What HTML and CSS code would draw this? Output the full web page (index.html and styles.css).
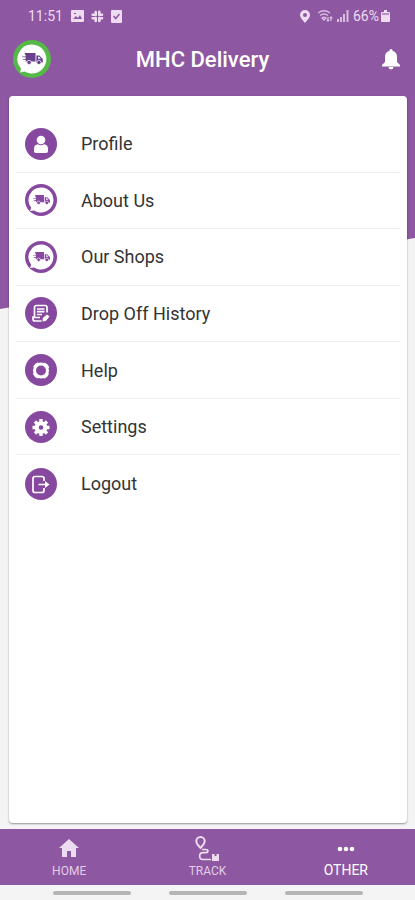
FILE: index.html
```html
<!DOCTYPE html>
<html lang="en">

<head>
    <title>MHC Delivery</title>
    <meta charset="utf-8">
    <meta name="viewport" content="width=device-width, initial-scale=1.0">
    <link rel="stylesheet" href="styles.css">
</head>

<body>

    <!-- shared symbols -->
    <svg class="symbols" aria-hidden="true">
        <symbol id="truck" viewBox="0 0 24 14">
            <path d="M3 0h12.500v10H4V8H1V7h3V5H0V4h4V2H3zM16.500 3h3.500l4 4v4h-7.500z" />
            <path d="M18.500 4.500h1.300l2 2.300h-3.300z" fill="#fff" />
            <circle cx="8" cy="11" r="2.500" stroke="#fff" stroke-width=".8" />
            <circle cx="19.500" cy="11" r="2.500" stroke="#fff" stroke-width=".8" />
        </symbol>
        <symbol id="badge" viewBox="0 0 32 32">
            <circle cx="16" cy="16" r="16" fill="#8749a0" />
            <path d="M16 3.500a12.500 12.500 0 1 1-7 22.900L5 27l1.200-3.300A12.500 12.500 0 0 1 16 3.500z" fill="#fff" />
            <use href="#truck" x="8" y="11" width="17" height="10" fill="#8749a0" />
        </symbol>
    </svg>

    <div class="backdrop"></div>

    <div class="status">
        <div class="status-left">
            <span>11:51</span>
            <svg width="13" height="13" viewBox="0 0 13 13">
                <rect width="13" height="12" rx="1" fill="#efdcf3" />
                <path d="M2 9l3-3 2 2 2-3 2 4zM3 3h2v1H3z" fill="#8d57a2" />
            </svg>
            <svg width="13" height="13" viewBox="0 0 13 13" stroke="#efdcf3" stroke-width="2.600" stroke-linecap="round">
                <path d="M4.700 2v3M8.300 1.700v3.300M4.700 8v3M8.300 8v3M1.700 4.700h3M8.300 4.700H11M1.700 8.300h3M8.300 8.300H11" />
            </svg>
            <svg width="11" height="13" viewBox="0 0 11 13">
                <rect width="11" height="13" rx="1" fill="#efdcf3" />
                <path d="M2.500 6l2.200 2.500L8.500 4" fill="none" stroke="#8d57a2" stroke-width="1.500" />
            </svg>
        </div>
        <div class="status-right">
            <svg width="10" height="13" viewBox="0 0 10 13">
                <path d="M5 0a5 5 0 0 1 5 5c0 3-3 5-5 8-2-3-5-5-5-8a5 5 0 0 1 5-5zm0 3a2 2 0 1 0 0 4 2 2 0 0 0 0-4z" fill="#efdcf3" fill-rule="evenodd" />
            </svg>
            <svg class="wifi" width="15" height="12" viewBox="0 0 15 12" fill="none" stroke="#d9bde0" stroke-width="1.300">
                <path d="M0 3q6-4.500 12 0M2 5.500q4-3 8 0M4 8q2-1.500 4 0L6 10zM10 7v4M8.800 9.800L10 11l1.200-1.200M13 11V7M11.800 8.200L13 7l1.200 1.200" />
            </svg>
            <svg width="12" height="12" viewBox="0 0 12 12" fill="#d9bde0">
                <path d="M0 9h2v3H0zM3 7h2v5H3zM6 4h2v8H6zM9.500 0h2v12h-2z" />
            </svg>
            <span>66%</span>
            <svg width="9" height="12" viewBox="0 0 9 12" fill="#efdcf3">
                <path d="M3 0h3v2h2a1 1 0 0 1 1 1v8a1 1 0 0 1-1 1H1a1 1 0 0 1-1-1V3a1 1 0 0 1 1-1h2z" />
                <path d="M1 3h7v2H1z" fill="#b48fc2" />
            </svg>
        </div>
    </div>

    <header>
        <a class="logo" href="#" aria-label="MHC Delivery">
            <svg width="38" height="38" viewBox="0 0 38 38">
                <circle cx="19" cy="19" r="19" fill="#56b947" />
                <path d="M19 4.500a14.500 14.500 0 1 1-7.500 27L7 32.500l1-4A14.500 14.500 0 0 1 19 4.500z" fill="#fff" />
                <use href="#truck" x="9" y="13" width="21" height="12" fill="#68408c" />
            </svg>
        </a>
        <h1>MHC Delivery</h1>
        <button class="bell" aria-label="Notifications">
            <svg width="18" height="22" viewBox="0 0 18 22" fill="#fff">
                <path d="M9 1c1 0 1.500.7 1.500 1.800C13.500 3.600 15 6 15 9v5l3 3v1.500H0V17l3-3V9c0-3 1.500-5.400 4.500-6.200C7.500 1.700 8 1 9 1zM6.500 19h5a2.500 2.500 0 0 1-5 0z" />
            </svg>
        </button>
    </header>

    <main>
        <ul class="menu">
            <li><a href="#">
                <svg class="icon" viewBox="0 0 32 32">
                    <circle cx="16" cy="16" r="16" fill="#8749a0" />
                    <circle cx="16" cy="12" r="4.300" fill="#fff" />
                    <path d="M9 24v-3c0-3 1.500-4.500 4-4.700q3 1.800 6 0c2.500.2 4 1.700 4 4.700v3q-1 1-2 1H11q-1 0-2-1z" fill="#fff" />
                </svg>
                Profile</a></li>
            <li><a href="#">
                <svg class="icon"><use href="#badge" /></svg>
                About Us</a></li>
            <li><a href="#">
                <svg class="icon"><use href="#badge" /></svg>
                Our Shops</a></li>
            <li><a href="#">
                <svg class="icon" viewBox="0 0 32 32" fill="none" stroke="#fff" stroke-width="1.700">
                    <circle cx="16" cy="16" r="16" fill="#8749a0" stroke="none" />
                    <path d="M22 15.500v-5a2 2 0 0 0-2-2h-8.500a2 2 0 0 0-2 2V20H8v2a2 2 0 0 0 2 2h6.500M9.500 20.500H15M12 12h7.500M12 14.700h7.500M12 17.500h5" />
                    <path d="M17.500 24.500l.3-3.500 4.200-3.500 2.500 2-3.700 4.500z" fill="#fff" stroke="none" />
                </svg>
                Drop Off History</a></li>
            <li><a href="#">
                <svg class="icon" viewBox="0 0 32 32" fill="none" stroke="#fff">
                    <circle cx="16" cy="16" r="16" fill="#8749a0" stroke="none" />
                    <circle cx="16" cy="16.500" r="6.500" stroke-width="3" />
                    <circle cx="16" cy="16.500" r="7.500" stroke-width="2.500" stroke-dasharray="6 5.780" stroke-dashoffset="-3" />
                </svg>
                Help</a></li>
            <li><a href="#">
                <svg class="icon" viewBox="0 0 32 32" fill="none" stroke="#fff">
                    <circle cx="16" cy="16" r="16" fill="#8749a0" stroke="none" />
                    <circle cx="16" cy="16.500" r="4.300" stroke-width="4" />
                    <path d="M16 8v4M16 21v4M7.500 16.500h4M20.500 16.500h4M10 10.500l3 3M19 19.500l3 3M10 22.500l3-3M19 13.500l3-3" stroke-width="3.400" />
                </svg>
                Settings</a></li>
            <li><a href="#">
                <svg class="icon" viewBox="0 0 32 32" fill="none" stroke="#fff" stroke-width="1.700">
                    <circle cx="16" cy="16" r="16" fill="#8749a0" stroke="none" />
                    <path d="M19 13v-2.500a2 2 0 0 0-2-2h-7a2 2 0 0 0-2 2v12a2 2 0 0 0 2 2h7a2 2 0 0 0 2-2V20M13.500 16.500H21" />
                    <path d="M20 13l4.500 3.500L20 20z" fill="#fff" stroke="none" />
                </svg>
                Logout</a></li>
        </ul>
    </main>

    <nav class="tabs">
        <a href="#">
            <svg width="20" height="24" viewBox="0 0 20 24">
                <path d="M10 3l10 9h-3v9h-5v-6H8v6H3v-9H0z" fill="#ecdcf0" />
            </svg>
            HOME</a>
        <a href="#">
            <svg width="26" height="26" viewBox="0 0 26 26" fill="none" stroke="#ecdcf0" stroke-width="2">
                <path d="M6.500 12C4.500 9.500 2.300 8 2.300 5.300a4.200 4.200 0 0 1 8.400 0c0 2.700-2.200 4.200-4.200 6.700z" />
                <path d="M8 13.500h4c2.500 0 2.500 3.200 0 3.200H9c-4.500 0-4.500 6.800 0 6.800h8" stroke-width="1.700" />
                <path d="M18 18h2.500v2h2v-2H25v7h-7z" fill="#ecdcf0" stroke="none" />
            </svg>
            TRACK</a>
        <a class="active" href="#">
            <svg width="18" height="24" viewBox="0 0 18 24" fill="#fff">
                <circle cx="3" cy="13" r="2.300" />
                <circle cx="9" cy="13" r="2.300" />
                <circle cx="15" cy="13" r="2.300" />
            </svg>
            OTHER</a>
    </nav>

    <div class="gestures">
        <span></span>
        <span></span>
        <span></span>
    </div>

</body></html>
```

FILE: styles.css
```css
* {
    box-sizing: border-box;
}

body {
    display: flex;
    flex-direction: column;
    min-height: 100vh;
    margin: 0;
    background-color: #f4f4f4;
    font-family: Roboto, "Liberation Sans", sans-serif;
}

a {
    color: inherit;
    text-decoration: none;
}

svg {
    flex-shrink: 0;
}

.symbols {
    position: absolute;
    width: 0;
    height: 0;
}

/* slanted purple behind the card */
.backdrop {
    position: absolute;
    z-index: -1;
    top: 0;
    left: 0;
    width: 100%;
    height: 309px;
    background-color: #8d57a2;
    clip-path: polygon(0 0, 100% 0, 100% 77%, 0 100%);
}

.status {
    display: flex;
    justify-content: space-between;
    height: 32px;
    padding: 0 25px 0 28px;
    color: #efdcf3;
    font-size: 14px;
}

.status-left,
.status-right {
    display: flex;
    align-items: center;
}

.status-left {
    gap: 7px;
}

.status-left span {
    margin-right: 1px;
}

.status-right {
    gap: 4px;
}

.status-right span {
    margin-right: -2px;
}

.wifi {
    margin-left: 4px;
}

header {
    display: grid;
    grid-template-columns: 38px 1fr 46px;
    align-items: center;
    height: 54px;
    padding: 0 15px 0 13px;
}

.logo,
.bell {
    display: flex;
}

.bell {
    justify-content: flex-end;
    padding: 0;
    border: none;
    background: none;
}

h1 {
    margin: 0;
    color: #fff;
    font-size: 22px;
    font-weight: 500;
    text-align: center;
}

main {
    flex: 1;
    margin: 10px 8px 6px 9px;
    padding: 20px 7px;
    border-radius: 4px;
    background-color: #fff;
    box-shadow: 0 1px 2px rgba(0, 0, 0, 0.4);
}

.menu {
    display: grid;
    grid-auto-rows: 1fr;
    height: 396px;
    margin: 0;
    padding: 0;
    list-style: none;
}

.menu li {
    border-bottom: 1px solid #eee;
}

.menu li:last-child {
    border-bottom: none;
}

.menu a {
    display: flex;
    align-items: center;
    gap: 24px;
    height: 100%;
    padding-left: 9px;
    color: #333;
    font-size: 18px;
}

.icon {
    width: 32px;
    height: 32px;
}

.tabs {
    display: grid;
    grid-template-columns: repeat(3, 1fr);
    height: 56px;
    background-color: #8d57a2;
    color: #e2cce8;
    font-size: 12px;
}

.tabs a {
    display: flex;
    flex-direction: column;
    align-items: center;
    justify-content: space-between;
    padding: 7px 0;
}

.tabs .active {
    color: #fff;
    font-size: 14px;
}

.gestures {
    display: grid;
    grid-template-columns: repeat(3, 78px);
    justify-content: center;
    gap: 38px;
    height: 15px;
    padding-top: 6px;
    background-color: #f4f4f4;
}

.gestures span {
    height: 4px;
    border-radius: 2px;
    background-color: #b5b5b5;
}
```
